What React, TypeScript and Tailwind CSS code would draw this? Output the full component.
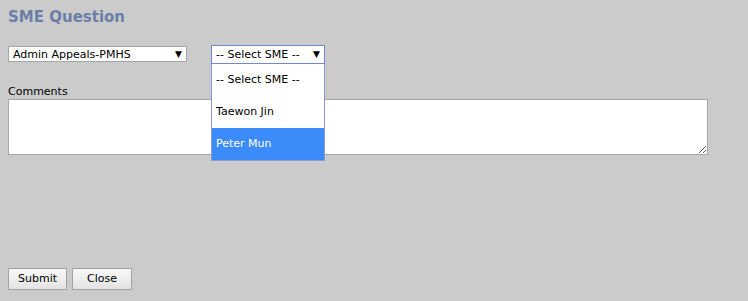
import { useState } from 'react';

const smeOptions = ['-- Select SME --', 'Taewon Jin', 'Peter Mun'];

function FakeSelect({ value, className }: { value: string; className: string }) {
  return (
    <div className={`flex items-center justify-between bg-white pl-[4px] pr-[4px] text-[11px] leading-none text-black ${className}`}>
      <span>{value}</span>
      <span className="text-[9px]">▼</span>
    </div>
  );
}

export default function App() {
  const [selected] = useState(2);

  return (
    <div className="min-h-[301px] w-[748px] bg-[#cbcbcb] px-[8px] pt-[7px] font-['DejaVu_Sans',Verdana,sans-serif]">
      <h1 className="text-[15px] font-bold leading-[20px] text-[#6a7fa8]">SME Question</h1>

      <div className="mt-[18px] flex items-start gap-[24px]">
        <FakeSelect value="Admin Appeals-PMHS" className="mt-[1px] h-[16px] w-[179px] border border-[#a6a6a6]" />
        <div className="relative">
          <FakeSelect value="-- Select SME --" className="h-[19px] w-[114px] border border-[#7189c7]" />
          <ul className="absolute left-0 top-[19px] z-10 w-[114px] border border-t-0 border-[#8a9cc8] bg-white text-[11px]">
            {smeOptions.map((opt, i) => (
              <li
                key={opt}
                className={`flex h-[32px] items-center pl-[4px] ${i === selected ? 'bg-[#3b8bfb] text-white' : 'text-black'}`}
              >
                {opt}
              </li>
            ))}
          </ul>
        </div>
      </div>

      <div className="mt-[20px] text-[11px] leading-[15px] text-black">Comments</div>
      <textarea className="mt-0 block h-[56px] w-[700px] resize border border-[#a6a6a6] bg-white" />

      <div className="mt-[113px] flex gap-[5px]">
        <button className="h-[22px] w-[59px] border border-[#a3a3a3] bg-gradient-to-b from-[#f8f8f8] to-[#e3e3e3] text-[11px] text-black">
          Submit
        </button>
        <button className="h-[22px] w-[60px] border border-[#a3a3a3] bg-gradient-to-b from-[#f8f8f8] to-[#e3e3e3] text-[11px] text-black">
          Close
        </button>
      </div>
    </div>
  );
}
